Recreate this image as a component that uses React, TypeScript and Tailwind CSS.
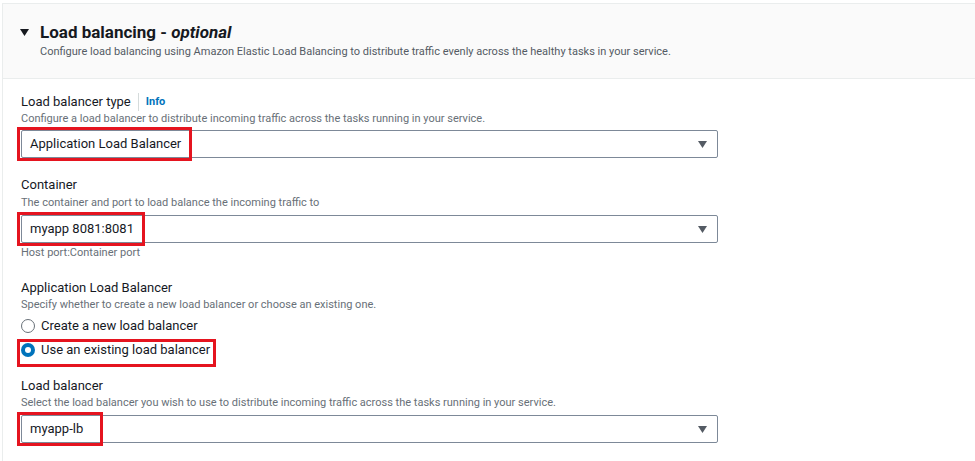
import React from 'react';

const font = { fontFamily: 'Roboto, "Liberation Sans", Arial, sans-serif' };

const Caret = () => (
  <svg width="9" height="7" viewBox="0 0 9 7" className="shrink-0">
    <path d="M0 0 H9 L4.5 7 Z" fill="#16191f" />
  </svg>
);

const SelectArrow = () => (
  <svg width="9" height="7" viewBox="0 0 9 7" className="shrink-0">
    <path d="M0 0 H9 L4.5 7 Z" fill="#545b64" />
  </svg>
);

interface SelectProps {
  value: string;
  markWidth: number;
}

const Select: React.FC<SelectProps> = ({ value, markWidth }) => (
  <div className="relative w-[697px]">
    <div className="flex h-[28px] items-center justify-between rounded-[2px] border border-[#7d8998] bg-white pl-[8px] pr-[10px]">
      <span className="text-[13px] text-[#16191f]">{value}</span>
      <SelectArrow />
    </div>
    {/* red annotation box */}
    <div
      className="pointer-events-none absolute left-[-4px] top-[-3px] h-[34px] border-[3px] border-[#e5141f]"
      style={{ width: markWidth }}
    />
  </div>
);

const Label: React.FC<{ children: React.ReactNode; className?: string }> = ({ children, className }) => (
  <div className={`text-[13px] leading-[18px] text-[#16191f] ${className || ''}`}>{children}</div>
);

const Desc: React.FC<{ children: React.ReactNode; className?: string }> = ({ children, className }) => (
  <div className={`text-[11px] leading-[16px] text-[#687078] ${className || ''}`}>{children}</div>
);

export default function App() {
  return (
    <div className="h-[461px] w-[975px] overflow-hidden bg-white pt-[3px] pl-[2px]" style={font}>
      <div className="h-full border-l border-t border-[#eaeded]">
        {/* header */}
        <div className="h-[75px] border-b border-[#eaeded] bg-[#fafafa] pl-[17px] pt-[17px]">
          <div className="flex items-center gap-[11px]">
            <Caret />
            <h2 className="text-[17px] font-bold leading-[22px] text-[#16191f]">
              Load balancing - <span className="italic">optional</span>
            </h2>
          </div>
          <p className="mt-[1px] pl-[20px] text-[11px] leading-[16px] text-[#545b64]">
            Configure load balancing using Amazon Elastic Load Balancing to distribute traffic evenly across the healthy tasks in your service.
          </p>
        </div>

        {/* body */}
        <div className="pl-[18px] pt-[14px]">
          <div className="flex items-center">
            <Label>Load balancer type</Label>
            <span className="mx-[7px] h-[18px] w-px bg-[#d5dbdb]" />
            <span className="text-[11px] font-bold text-[#0073bb]">Info</span>
          </div>
          <Desc>Configure a load balancer to distribute incoming traffic across the tasks running in your service.</Desc>
          <div className="mt-[3px]">
            <Select value="Application Load Balancer" markWidth={175} />
          </div>

          <Label className="mt-[18px]">Container</Label>
          <Desc className="mt-[1px]">The container and port to load balance the incoming traffic to</Desc>
          <div className="mt-[4px]">
            <Select value="myapp 8081:8081" markWidth={128} />
          </div>
          <Desc className="mt-[2px]">Host port:Container port</Desc>

          <Label className="mt-[18px]">Application Load Balancer</Label>
          <Desc>Specify whether to create a new load balancer or choose an existing one.</Desc>
          <div className="mt-[3px] flex h-[20px] items-center gap-[6px]">
            <span className="h-[14px] w-[14px] rounded-full border-[1.5px] border-[#687078] bg-white" />
            <span className="text-[13px] text-[#16191f]">Create a new load balancer</span>
          </div>
          <div className="relative mt-[4px] flex h-[20px] items-center gap-[6px]">
            <span className="flex h-[14px] w-[14px] items-center justify-center rounded-full bg-[#0073bb]">
              <span className="h-[6px] w-[6px] rounded-full bg-white" />
            </span>
            <span className="text-[13px] text-[#16191f]">Use an existing load balancer</span>
            <div className="pointer-events-none absolute left-[-4px] top-[-1px] h-[28px] w-[199px] border-[3px] border-[#e5141f]" />
          </div>

          <Label className="mt-[17px]">Load balancer</Label>
          <Desc>Select the load balancer you wish to use to distribute incoming traffic across the tasks running in your service.</Desc>
          <div className="mt-[4px]">
            <Select value="myapp-lb" markWidth={86} />
          </div>
        </div>
      </div>
    </div>
  );
}
